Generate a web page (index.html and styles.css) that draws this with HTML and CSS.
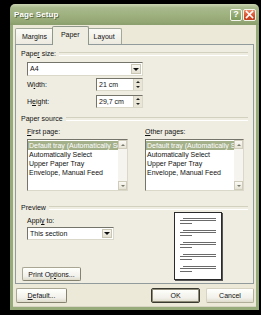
FILE: index.html
```html
<!DOCTYPE html>
<html>
<head>
<meta charset="utf-8">
<title>Page Setup</title>
<link rel="stylesheet" href="styles.css">
</head>
<body>
<div class="window">
  <div class="titlebar">
    <span class="title">Page Setup</span>
    <span class="tb-btn help">?</span>
    <span class="tb-btn close"><svg width="9" height="9" viewBox="0 0 9 9"><path d="M1.5 1.5 L7.5 7.5 M7.5 1.5 L1.5 7.5" stroke="#fff" stroke-width="1.6" stroke-linecap="square"/></svg></span>
  </div>
  <div class="frame">
    <div class="tabs">
      <div class="tab">Margins</div>
      <div class="tab sel">Paper</div>
      <div class="tab">Layout</div>
    </div>
    <div class="panel">
      <div class="ghead"><span>Pape<u>r</u> size:</span></div>
      <div class="select a4"><span class="val">A4</span><span class="drop"></span></div>
      <div class="frow r1"><span class="lbl">W<u>i</u>dth:</span><div class="spin"><span class="val">21 cm</span><span class="spinbtns"><i class="up"></i><i class="dn"></i></span></div></div>
      <div class="frow r2"><span class="lbl">H<u>e</u>ight:</span><div class="spin"><span class="val">29,7 cm</span><span class="spinbtns"><i class="up"></i><i class="dn"></i></span></div></div>

      <div class="ghead src"><span>Paper source</span></div>
      <div class="cols">
        <div class="col c1">
          <div class="clabel"><u>F</u>irst page:</div>
          <div class="list l1">
            <div class="items">
              <div class="item hl">Default tray (Automatically Select)</div>
              <div class="item">Automatically Select</div>
              <div class="item">Upper Paper Tray</div>
              <div class="item">Envelope, Manual Feed</div>
            </div>
            <div class="sb"><span class="sbb"><i class="up"></i></span><span class="sbb"><i class="dn"></i></span></div>
          </div>
        </div>
        <div class="col c2">
          <div class="clabel"><u>O</u>ther pages:</div>
          <div class="list l2">
            <div class="items">
              <div class="item hl">Default tray (Automatically Select)</div>
              <div class="item">Automatically Select</div>
              <div class="item">Upper Paper Tray</div>
              <div class="item">Envelope, Manual Feed</div>
            </div>
            <div class="sb"><span class="sbb"><i class="up"></i></span><span class="sbb"><i class="dn"></i></span></div>
          </div>
        </div>
      </div>

      <div class="ghead prev"><span>Preview</span></div>
      <div class="prow">
        <div class="pleft">
          <div class="alabel">Appl<u>y</u> to:</div>
          <div class="select apply"><span class="val">This section</span><span class="drop"></span></div>
          <div class="btn popt">Print Op<u>t</u>ions...</div>
        </div>
        <div class="page">
          <div class="para"><i class="ln ind"></i><i class="ln"></i><i class="ln short"></i></div>
          <div class="para"><i class="ln ind"></i><i class="ln"></i><i class="ln short"></i></div>
          <div class="para"><i class="ln ind"></i><i class="ln"></i><i class="ln short"></i></div>
          <div class="para"><i class="ln ind"></i><i class="ln"></i><i class="ln short"></i></div>
          <div class="para"><i class="ln ind"></i><i class="ln"></i><i class="ln short"></i></div>
        </div>
      </div>
    </div>
    <div class="bottom">
      <div class="btn dflt"><u>D</u>efault...</div>
      <div class="spacer"></div>
      <div class="btn ok">OK</div>
      <div class="btn cancel">Cancel</div>
    </div>
  </div>
</div>
</body>
</html>
```

FILE: styles.css
```css
* { box-sizing: border-box; }
html, body { margin: 0; }
body {
  background: #000;
  width: 261px;
  height: 315px;
  overflow: hidden;
  padding: 4px 0 0 10px;
  font-family: "Liberation Sans", Arial, sans-serif;
  font-size: 7px;
  color: #111;
}
u { text-decoration: underline; text-underline-offset: 1px; }
i { display: block; }

.window {
  width: 249px;
  height: 306px;
  display: flex;
  flex-direction: column;
}

/* title bar */
.titlebar {
  height: 21px;
  flex: none;
  display: flex;
  align-items: center;
  padding: 0 3px 0 4px;
  border-radius: 5px 5px 0 0;
  background: linear-gradient(#C9D3B1 0%, #A9BA8C 18%, #9DB07E 55%, #93A774 85%, #8A9D6C 100%);
}
.title {
  flex: 1;
  color: #fff;
  font-weight: bold;
  font-size: 8px;
  text-shadow: 1px 1px 0 #5C6A44;
  letter-spacing: 0.1px;
}
.tb-btn {
  width: 12px;
  height: 12px;
  border: 1px solid #F4F6EE;
  border-radius: 2px;
  display: flex;
  align-items: center;
  justify-content: center;
  color: #fff;
  font-weight: bold;
  font-size: 9px;
  line-height: 1;
}
.help { background: linear-gradient(#A6BA86, #7E9A5C); }
.close { width: 13px; margin-left: 1px; background: linear-gradient(#EE8A6A, #D4502C 60%, #C2401F); }

/* frame */
.frame {
  flex: 1;
  display: flex;
  flex-direction: column;
  background: #ECE9D8;
  border: 3px solid #97AA79;
  border-top: 0;
  box-shadow: inset 0 -1px 0 #D8D5C4;
}

/* tabs */
.tabs {
  height: 18px;
  margin-top: 1px;
  padding: 0 2px;
  display: flex;
  align-items: flex-end;
  flex: none;
}
.tab {
  height: 16px;
  padding: 0 6px;
  border: 1px solid #A3A99A;
  border-bottom: 0;
  border-radius: 2px 2px 0 0;
  background: linear-gradient(#FBFAF6, #ECEAE0);
  line-height: 15px;
  white-space: nowrap;
}
.tab.sel {
  height: 19px;
  margin: 0 -2px -1px;
  padding: 0 8px;
  background: #EFEDE2;
  border-color: #8F978A;
  position: relative;
  z-index: 1;
  line-height: 16px;
}

/* panel */
.panel {
  flex: none;
  height: 240px;
  margin: 0 2px;
  border: 1px solid #919B9C;
  background: #EFEDE2;
  padding-top: 4px;
}
.ghead {
  height: 9px;
  padding: 0 5px;
  display: flex;
  align-items: center;
  gap: 3px;
  line-height: 9px;
  white-space: nowrap;
}
.ghead::after {
  content: "";
  flex: 1;
  height: 2px;
  border-top: 1px solid #D2D0BF;
  border-bottom: 1px solid #FFFFFF;
}
.ghead.src { margin-top: 6px; }
.ghead.prev { margin-top: 12px; }

.select {
  display: flex;
  height: 14px;
  background: #fff;
  border: 1px solid;
  border-color: #74746A #DAD8C8 #DAD8C8 #74746A;
}
.select .val, .spin .val {
  flex: 1;
  padding-left: 2px;
  line-height: 12px;
  white-space: nowrap;
  overflow: hidden;
}
.drop {
  width: 10px;
  margin: 1px;
  background: linear-gradient(#F8F7F1, #E4E1D2);
  border: 1px solid #C9C6B4;
  display: flex;
  align-items: center;
  justify-content: center;
}
.drop::before {
  content: "";
  border-left: 3px solid transparent;
  border-right: 3px solid transparent;
  border-top: 3px solid #111;
}
.a4 { width: 116px; margin: 4px 0 0 11px; }
.apply { width: 87px; height: 13px; margin-top: 2px; }

.frow {
  display: flex;
  align-items: center;
  margin-left: 11px;
  height: 13px;
}
.frow.r1 { margin-top: 2px; }
.frow.r2 { margin-top: 4px; }
.lbl { width: 69px; }
.spin {
  width: 47px;
  height: 13px;
  display: flex;
  background: #fff;
  border: 1px solid;
  border-color: #74746A #DAD8C8 #DAD8C8 #74746A;
}
.spinbtns {
  width: 9px;
  display: flex;
  flex-direction: column;
  background: #E9E6D8;
  border-left: 1px solid #D2CFBE;
}
.spinbtns i, .sbb {
  flex: 1;
  display: flex;
  align-items: center;
  justify-content: center;
}
i.up::before, i.dn::before {
  content: "";
  border-left: 2px solid transparent;
  border-right: 2px solid transparent;
}
i.up::before { border-bottom: 2px solid #222; }
i.dn::before { border-top: 2px solid #222; }

/* columns */
.cols { display: flex; margin: 4px 0 0 11px; }
.col.c1 { width: 118px; }
.clabel { height: 9px; line-height: 9px; }
.list {
  margin-top: 3px;
  height: 52px;
  display: flex;
  background: #fff;
  border: 1px solid;
  border-color: #74746A #DAD8C8 #DAD8C8 #74746A;
}
.l1 { width: 101px; }
.l2 { width: 99px; }
.items { flex: 1; overflow: hidden; padding-top: 1px; }
.item {
  height: 9px;
  line-height: 9px;
  padding-left: 1px;
  white-space: nowrap;
  overflow: hidden;
}
.item.hl { background: #A4B08A; color: #fff; }
.sb {
  width: 9px;
  background: #F5F4EE;
  display: flex;
  flex-direction: column;
  justify-content: space-between;
}
.sbb {
  flex: none;
  height: 9px;
  background: linear-gradient(#FAF9F4, #E6E3D5);
  border: 1px solid #CFCCBB;
}
.sbb i { display: flex; }
.sbb i.up::before { border-bottom-color: #7A7A6E; }
.sbb i.dn::before { border-top-color: #7A7A6E; }

/* preview */
.prow { display: flex; }
.pleft { width: 158px; }
.alabel { margin: 4px 0 0 11px; height: 9px; line-height: 9px; }
.pleft .apply { margin-left: 11px; }
.page {
  width: 48px;
  height: 68px;
  background: #fff;
  border: 1px solid #2A2A2A;
  box-shadow: 1px 1px 0 #555;
  padding: 5px 0 0 5px;
}
.para { margin-bottom: 6px; }
.ln { width: 36px; height: 1px; background: #6B6B6B; margin-bottom: 1px; }
.ln.ind { width: 33px; margin-left: 3px; }
.ln.short { width: 12px; margin-top: 2px; margin-bottom: 0; }

/* buttons */
.btn {
  height: 15px;
  display: flex;
  align-items: center;
  justify-content: center;
  border: 1px solid #A9A794;
  border-right-color: #85836F;
  border-bottom-color: #85836F;
  border-radius: 2px;
  background: linear-gradient(#FFFFFD, #F1F0E9 70%, #DEDBCB);
  white-space: nowrap;
}
.popt { width: 59px; height: 14px; margin: 27px 0 0 6px; }
.bottom {
  display: flex;
  margin-top: 4px;
  padding: 0 2px 0 3px;
}
.spacer { flex: 1; }
.dflt { width: 51px; }
.ok {
  width: 49px;
  border: 1px solid #3A3A30;
  box-shadow: inset 0 0 0 1px #8E8C78;
}
.cancel { width: 48px; margin-left: 6px; border-color: #D6D3C2 #B0AD98 #B0AD98 #D6D3C2; }
```
